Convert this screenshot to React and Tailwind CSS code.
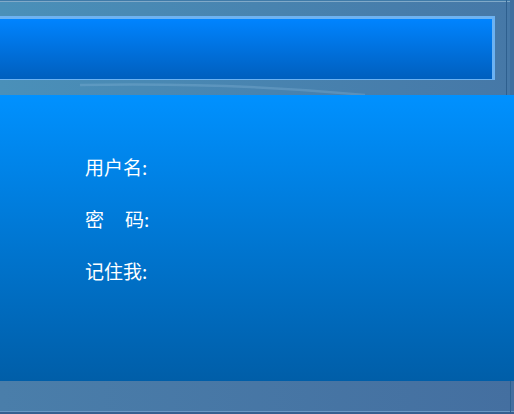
export default function App() {
  const font = { fontFamily: '"Microsoft YaHei", "Noto Sans CJK SC", "Noto Sans", sans-serif' };
  return (
    <div className="w-[514px] h-[414px] overflow-hidden flex flex-col bg-[#4783b0]" style={font}>
      {/* top strip */}
      <div className="relative h-[95px] bg-gradient-to-r from-[#4a90b9] to-[#4678a7] border-r-[4px] border-r-[#3f6f9f]">
        <div className="h-[1px] bg-[#3f7aa8]" />
        <div className="h-[1px] bg-[#80a9c8]" />
        <div className="mt-[14px] w-[495px] h-[64px] border-t-[3px] border-r-[3px] border-b border-[#6cb2f2] bg-gradient-to-b from-[#0084ff] to-[#005fbe]" />
        <svg className="absolute left-0 top-[78px]" width="514" height="17" viewBox="0 0 514 17">
          <path d="M80 7 C 190 5, 280 9, 365 17" stroke="#8cbbd9" strokeOpacity="0.3" strokeWidth="2.5" fill="none" />
        </svg>
        <div className="absolute right-[3px] top-0 h-full w-[1px] bg-[#2e5f8e]" />
      </div>
      {/* main panel */}
      <div className="h-[286px] bg-gradient-to-b from-[#0091ff] to-[#005ea8] pl-[85px] pt-[59px] flex flex-col gap-[27px] text-white text-[19px] leading-[25px]">
        <div>用户名:</div>
        <div className="flex"><span>密</span><span className="ml-[21px]">码:</span></div>
        <div>记住我:</div>
      </div>
      {/* bottom strip */}
      <div className="relative h-[33px] flex flex-col bg-gradient-to-r from-[#4a7eaa] to-[#446fa0]">
        <div className="flex-1" />
        <div className="h-[1px] bg-[#6c98c4]" />
        <div className="h-[2px] bg-[#365f90]" />
        <div className="absolute right-[3px] top-0 h-full w-[1px] bg-[#2e5f8e]" />
      </div>
    </div>
  );
}
